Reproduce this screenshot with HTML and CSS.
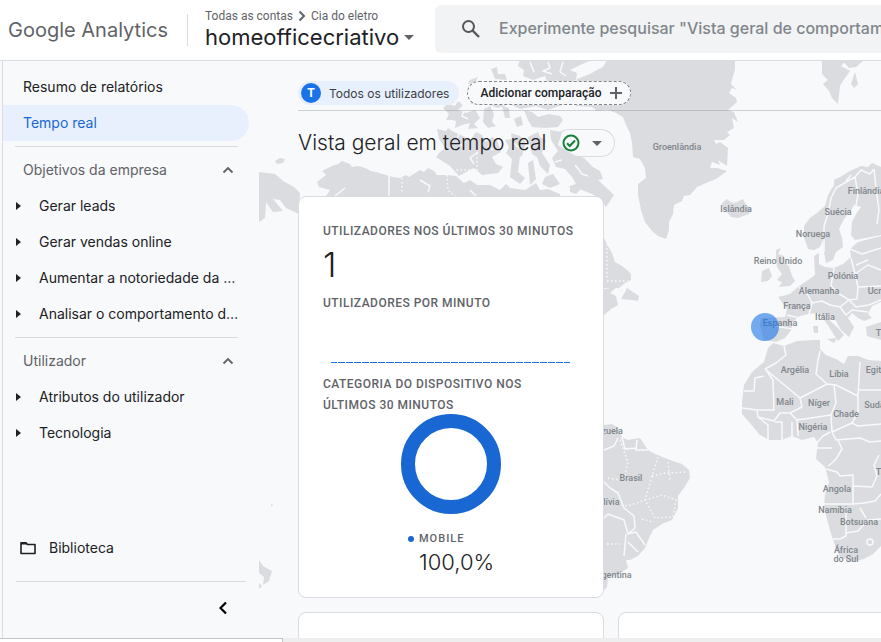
FILE: index.html
```html
<!DOCTYPE html>
<html lang="pt">
<head>
<meta charset="utf-8">
<title>Google Analytics</title>
<meta name="viewport" content="width=device-width, initial-scale=1">
<link rel="stylesheet" href="styles.css">
</head>
<body>
<header class="topbar">
  <div class="brand">Google Analytics</div>
  <div class="account">
    <nav class="crumbs" aria-label="Contas">
      <a href="#">Todas as contas</a>
      <svg width="8" height="12" viewBox="0 0 8 12"><path d="M1.5 1.5 6 6l-4.500 4.500" fill="none" stroke="#5f6368" stroke-width="2"/></svg>
      <a href="#">Cia do eletro</a>
    </nav>
    <button class="property" type="button">homeofficecriativo
      <svg width="10" height="5" viewBox="0 0 10 5"><path d="M0 0h10L5 5z" fill="#5f6368"/></svg>
    </button>
  </div>
  <label class="search">
    <svg width="20" height="20" viewBox="0 0 20 20" fill="none" stroke="#54585d"><circle cx="7.500" cy="7.500" r="5.500" stroke-width="2"/><path d="M11.500 11.500 18 18" stroke-width="2.400"/></svg>
    <input type="text" aria-label="Pesquisar" placeholder="Experimente pesquisar &quot;Vista geral de comportamento&quot;">
  </label>
</header>

<div class="body">
  <aside class="sidebar">
    <nav class="menu" aria-label="Relatórios">
      <a class="item" href="#">Resumo de relatórios</a>
      <a class="item active" href="#">Tempo real</a>
      <hr>
      <button class="item group" type="button">Objetivos da empresa
        <svg width="12" height="8" viewBox="0 0 12 8"><path d="M1.500 6.500 6 2l4.500 4.500" fill="none" stroke="#5f6368" stroke-width="1.800"/></svg>
      </button>
      <a class="item sub" href="#"><span>Gerar leads</span></a>
      <a class="item sub" href="#"><span>Gerar vendas online</span></a>
      <a class="item sub" href="#"><span>Aumentar a notoriedade da marca</span></a>
      <a class="item sub" href="#"><span>Analisar o comportamento dos utilizadores</span></a>
      <hr>
      <button class="item group" type="button">Utilizador
        <svg width="12" height="8" viewBox="0 0 12 8"><path d="M1.500 6.500 6 2l4.500 4.500" fill="none" stroke="#5f6368" stroke-width="1.800"/></svg>
      </button>
      <a class="item sub" href="#"><span>Atributos do utilizador</span></a>
      <a class="item sub" href="#"><span>Tecnologia</span></a>
    </nav>
    <div class="library">
      <a class="item lib" href="#">
        <svg width="16" height="14" viewBox="0 0 16 14"><path d="M1 12.500V1.800h5l1.500 1.700H15v9z" fill="none" stroke="#202124" stroke-width="1.600" stroke-linejoin="round"/><path d="M1 1.500h5l1.500 2H1z" fill="#202124"/></svg>
        Biblioteca
      </a>
      <button class="collapse" type="button" aria-label="Fechar menu">
        <svg width="10" height="14" viewBox="0 0 10 14"><path d="M8 1.500 2.500 7 8 12.500" fill="none" stroke="#000" stroke-width="2.200"/></svg>
      </button>
    </div>
  </aside>

  <main class="content">
    <svg class="map" width="640" height="600" viewBox="259 61 640 600" aria-label="Mapa">
      <g class="land">
        <!-- Greenland and Ellesmere -->
        <path d="M607 60 603 67 597 70 590 74 577 79 574 90 576 106 592 107 597 111 608 110 616 113 623 117 626 125 630 133 632 143 633 157 640 159 645 168 646 178 638 184 638 195 641 210 645 222 652 231 658 236 666 239 669 230 669 222 673 214 674 205 682 201 684 196 690 195 697 187 706 183 716 179 727 171 717 168 710 168 712 162 720 165 718 160 710 155 727 166 728 148 720 142 716 144 714 140 724 140 730 135 727 132 734 128 732 118 738 122 734 112 728 110 737 102 736 98 729 93 732 88 737 90 731 84 733 76 735 70 735 60Z"/>
        <path d="M520 60 518 66 524 70 523 76 533 80 545 76 548 84 556 80 564 84 576 80 577 73 570 70 580 65 592 60Z"/>
        <path d="M491 69 497 67 498 74 505 74 507 80 495 79Z M470 80 478 77 475 83 468 84Z M468 86 478 84 490 88 500 83 510 91 524 90 540 98 556 96 566 104 556 107 548 110 536 106 520 109 510 104 497 108 484 102 471 104Z"/>
        <!-- Arctic archipelago -->
        <path d="M443 108 448 104 455 106 458 101 463 105 458 110 466 113 475 110 480 118 474 124 478 128 468 129 470 123 462 125 455 128 456 121 452 120 446 120 449 114Z M484 109 490 106 494 114 492 122 496 126 488 128 483 122Z M502 106 509 108 510 118 505 118Z M514 119 521 116 523 125 517 127Z M524 110 532 112 538 117 549 114 560 116 563 120 558 127 545 128 532 127 528 120Z M437 129 446 131 448 128 452 131 463 136 470 140 476 132 482 135 486 142 492 137 497 140 501 152 492 157 496 164 503 167 498 173 482 175 474 168 468 171 459 176 450 166 436 157 440 152 445 148 439 139Z M505 140 512 139 511 133 520 136 526 143 522 156 513 160 506 153 509 147Z M528 137 538 132 540 137 546 140 542 153 550 165 548 174 540 166 537 157 532 154Z M550 130 562 132 558 145 574 155 584 158 593 167 600 171 603 179 598 180 614 195 606 207 599 198 592 194 582 190 568 187 576 184 572 177 565 169 556 167 552 158 558 151 551 140Z"/>
        <path d="M512 158 520 156 518 172 525 178 520 184 510 177Z M528 163 533 160 536 179 530 185Z M545 177 553 174 560 184 550 188 542 184Z M570 186 577 184 580 190 576 194 570 192Z"/>
        <!-- Alaska and northern mainland -->
        <path d="M275 161 280 158 285 159 283 163 277 164Z M259 172 275 174 283 181 294 187 300 193 299 214 286 208 280 200 273 199 283 211 273 212 266 202 265 218 259 222Z"/>
        <path d="M317 182 326 175 322 171 332 166 338 164 342 161 350 164 352 167 358 166 365 168 371 171 376 172 389 176 393 177 400 178 406 175 409 177 420 170 424 172 428 168 434 171 437 175 447 175 456 176 464 183 470 180 477 185 490 185 500 190 506 184 510 188 525 190 536 183 540 190 548 189 560 194 560 200 300 200 326 196 330 190 319 187Z"/>
        <!-- Quebec, Labrador, Newfoundland -->
        <path d="M604 238 608 246 612 253 615 262 622 266 627 270 631 274 631 280 625 283 619 288 604 288Z M630 281 627 288 633 292 639 296 638 301 632 300 621 299 625 292Z M604 289 617 287 610 293 616 296 618 305 611 309 604 315Z"/>
        <!-- South America -->
        <path d="M604 425 612 424 618 428 622 437 628 440 640 438 648 450 655 454 670 460 682 464 689 470 690 478 684 488 678 496 678 508 672 520 662 524 653 530 649 538 645 548 638 556 630 560 626 560 628 568 619 574 608 578 607 587 604 590Z"/>
        <!-- Svalbard, Iceland -->
        <path d="M822 61 846 61 841 66 850 71 843 81 840 86 838 104 832 98 829 91 823 84 828 80 822 74Z M855 72 858 84 854 88 851 84Z M843 61 863 61 856 67 849 68Z M723 207 722 203 727 199 732 203 737 202 743 199 746 205 751 209 749 214 738 218 731 217 726 211Z"/>
        <!-- Scandinavia and continental Europe -->
        <path d="M881 167 872 163 868 167 861 166 850 171 842 176 834 180 834 185 828 195 825 206 817 213 810 218 804 226 804 237 808 249 814 250 820 247 823 240 824 252 826 263 833 260 836 252 843 247 842 238 839 229 844 219 850 212 854 205 861 207 856 214 852 222 851 235 855 240 866 238 881 235Z"/>
        <path d="M776 250 781 248 778 254 784 256 783 262 789 266 792 276 795 281 790 286 779 287 782 282 777 280 782 274 777 267 776 260Z M762 271 769 268 772 276 768 281 761 282Z M814 256 819 253 819 264 825 267 834 268 843 264 851 257 850 249 858 242 881 236 881 302 872 306 868 314 872 318 864 321 858 318 852 313 848 318 854 327 849 337 841 330 836 321 830 315 826 317 838 328 844 335 838 341 829 327 822 317 818 313 808 314 800 316 791 323 792 329 785 338 776 342 764 340 760 326 761 318 785 317 787 309 778 297 790 294 799 286 808 280 815 275Z M813 326 818 326 818 333 814 333Z M827 339 837 338 834 343Z M866 327 881 322 881 340 867 336Z"/>
        <!-- Africa -->
        <path d="M773 343 784 346 797 341 814 340 820 340 820 349 826 355 836 359 844 364 848 356 858 356 868 360 881 361V546L873 554 864 559 852 562 840 557 834 543 829 527 824 507 825 494 829 482 825 467 816 459 817 450 818 443 814 437 802 440 792 436 782 440 769 440 760 435 750 423 742 414 742 402 744 385 752 372 764 362 768 348Z"/>
        <path d="M259 560 263 566 272 571 269 581 263 585 264 577 259 573Z M259 583 262 586 259 589Z M271 504 273 505 273 506 271 506Z"/>
      </g>
      <g class="borders">
        <!-- Fjords and straits -->
        <path d="M548 62 550 68 543 71 552 74 M530 62 534 72 M563 62 560 72 566 76 M460 131 457 139 462 146 M478 152 470 158 474 164 M488 146 493 150 M466 104 462 116 468 119 M514 143 519 148 M555 162 562 160 M575 165 582 174 588 176 M335 196 345 188 M420 180 430 186 428 192 M470 190 476 196"/>
        <path d="M389 173v24 M784 346 786 355 776 363 765 369 M765 369 800 398 827 384 816 374 818 360 820 351 M827 384 836 385 858 396 860 362 M744 391 754 391 755 378 764 376 M766 370 773 380 774 410 757 410 742 408 M800 398 802 407 790 413 780 413 774 421 758 417 757 410 M790 413 797 420 831 415 836 403 834 385 M858 390 881 390 M858 396 858 413 852 423 832 432 831 415 M797 420 798 436 M782 440 782 422 775 422 M768 440 768 425 758 417 M792 436 792 422 M830 432 823 436 816 444 M832 432 836 440 860 438 870 442 881 441 M852 423 858 426 881 424 M826 469 837 472 840 476 853 475 853 486 872 487 877 476 874 465 879 455 M823 504 853 504 853 486 M853 504 864 503 875 501 881 494 M846 507 846 536 840 539 833 539 M846 533 858 531 868 520 881 519 M866 518 860 508 M838 440 842 449 836 459 832 463 828 466 M816 448 832 448"/>
        <path d="M824 252 824 226 828 214 831 198 836 188 846 182 855 177 861 170 870 174 874 169 M855 177 858 194 856 206 M874 169 876 188 879 210 877 224 M846 181 851 175 M792 329 775 326 770 320 M787 315 800 318 M799 287 808 295 812 303 809 315 M812 303 822 301 830 305 840 307 849 300 838 293 831 286 834 268 M849 300 857 299 858 287 855 274 851 258 M858 287 881 286 M855 274 868 265 881 270 M840 307 846 315 852 310 868 312 M849 300 856 307 869 305 881 300 M850 249 862 254 881 248 M856 265 868 260"/>
        <path d="M604 450 614 446 618 438 M622 437 625 449 636 448 M637 440 636 450 648 450 M604 482 610 488 618 493 624 508 634 516 635 528 628 534 624 520 608 514 604 518 M628 534 636 532 645 545 M628 542 638 552 M626 534 624 556"/>
        <circle cx="870" cy="542" r="3"/>
        <path class="dotted" d="M477 145V170H454 M447 175 448 190 456 197 M402 178V194 M607 240 607 280 M607 281H628 M658 457 652 476 645 500 628 506 617 504 M652 476 665 473 687 472 M668 462 670 480 M645 500 662 495 676 500 673 517 655 518 645 500 M642 519 652 522 M607 544H620 M620 440 628 462 624 480 M608 478 620 480"/>
      </g>
      <g class="labels">
        <text x="677" y="150">Groenlândia</text><text x="736" y="212">Islândia</text><text x="866" y="194">Finlândia</text><text x="838" y="215">Suécia</text><text x="813" y="237">Noruega</text><text x="778" y="264">Reino Unido</text><text x="843" y="279">Polónia</text><text x="819" y="294">Alemanha</text><text x="883" y="294">Ucrânia</text><text x="797" y="309">França</text><text x="825" y="320">Itália</text><text x="780" y="326">Espanha</text><text x="891" y="336">Turquia</text><text x="795" y="373">Argélia</text><text x="839" y="377">Líbia</text><text x="876" y="373">Egito</text><text x="785" y="405">Mali</text><text x="819" y="406">Níger</text><text x="877" y="408">Sudão</text><text x="846" y="417">Chade</text><text x="813" y="430">Nigéria</text><text x="894" y="475">Tanzânia</text><text x="837" y="492">Angola</text><text x="835" y="513">Namíbia</text><text x="859" y="525">Botsuana</text><text x="846" y="553">África</text><text x="846" y="562">do Sul</text><text x="602" y="434">Venezuela</text><text x="631" y="481">Brasil</text><text x="606" y="505">Bolívia</text><text x="612" y="578">Argentina</text>
      </g>
      <circle class="pin" cx="765" cy="327" r="14"/>
    </svg>

    <div class="comparisons">
      <button class="chip" type="button"><span class="avatar">T</span>Todos os utilizadores</button>
      <button class="chip add" type="button">Adicionar comparação
        <svg width="12" height="12" viewBox="0 0 12 12"><path d="M6 0v12M0 6h12" stroke="#5f6368" stroke-width="2"/></svg>
      </button>
    </div>

    <div class="heading">
      <h1>Vista geral em tempo real</h1>
      <button class="status" type="button" aria-label="Qualidade dos dados">
        <svg width="18" height="18" viewBox="0 0 18 18" fill="none" stroke="#188038"><circle cx="9" cy="9" r="7.500" stroke-width="2"/><path d="M5 9.200 7.800 12 13 6.500" stroke-width="2"/></svg>
        <svg width="10" height="5" viewBox="0 0 10 5"><path d="M0 0h10L5 5z" fill="#5f6368"/></svg>
      </button>
    </div>

    <div class="cards">
      <section class="card">
        <h2>Utilizadores nos últimos 30 minutos</h2>
        <p class="total">1</p>
        <h2>Utilizadores por minuto</h2>
        <div class="bars"></div>
        <h2 class="wrap">Categoria do dispositivo nos últimos 30 minutos</h2>
        <svg class="donut" width="100" height="100" viewBox="0 0 100 100"><circle cx="50" cy="50" r="43" fill="none" stroke="#1967d2" stroke-width="14"/></svg>
        <dl class="legend">
          <dt>Mobile</dt>
          <dd>100,0%</dd>
        </dl>
      </section>
      <section class="card"></section>
      <section class="card"></section>
    </div>
  </main>
</div>
<footer class="statusbar"><div class="link-status"></div></footer>
</body>
</html>
```
FILE: styles.css
```css
* { box-sizing: border-box; }

body {
  margin: 0;
  height: 100vh;
  display: flex;
  flex-direction: column;
  overflow: hidden;
  background: #f8f9fb;
  color: #202124;
  font-family: "Inter", "Open Sans", sans-serif;
  font-size: 14px;
}

button {
  border: 0;
  padding: 0;
  background: none;
  color: inherit;
  font: inherit;
  cursor: pointer;
}

a { color: inherit; text-decoration: none; }
svg { display: block; flex: none; }
h1, h2, p, dl, dd { margin: 0; font-weight: 400; }

/* Top bar */
.topbar {
  flex: none;
  display: flex;
  align-items: center;
  height: 61px;
  padding-left: 8px;
  background: #fff;
  border-bottom: 1px solid #dadce0;
}

.brand {
  width: 180px;
  height: 32px;
  line-height: 32px;
  color: #5f6368;
  font-size: 20px;
  white-space: nowrap;
  border-right: 1px solid #dadce0;
}

.account {
  width: 230px;
  margin-left: 17px;
}

.crumbs {
  display: flex;
  align-items: center;
  gap: 5px;
  color: #5f6368;
  font-family: Roboto, sans-serif;
  font-size: 12px;
  line-height: 14px;
}

.property {
  display: flex;
  align-items: center;
  gap: 5px;
  font-size: 22px;
  line-height: 28px;
}

.search {
  flex: 1;
  min-width: 0;
  display: flex;
  align-items: center;
  gap: 18px;
  height: 48px;
  margin-bottom: 2px;
  padding-left: 26px;
  background: #f1f3f4;
  border-radius: 6px 0 0 6px;
}

.search input {
  flex: 1;
  min-width: 0;
  border: 0;
  padding: 0 0 2px;
  background: none;
  font: 500 16px "Inter", sans-serif;
  outline: 0;
}

.search input::placeholder { color: #80868b; opacity: 1; }

.body {
  flex: 1;
  min-height: 0;
  display: flex;
}

/* Sidebar */
.sidebar {
  flex: none;
  width: 257px;
  margin-left: 2px;
  padding: 8px 10px 5px 0;
  display: flex;
  flex-direction: column;
  justify-content: space-between;
  border-left: 1px solid #dadce0;
}

.item {
  display: flex;
  align-items: center;
  width: 100%;
  height: 36px;
  padding: 0 10px 1px 20px;
  text-align: left;
  white-space: nowrap;
}

.item.active {
  background: #e8f0fe;
  color: #1967d2;
  border-radius: 0 18px 18px 0;
}

.item.group {
  justify-content: space-between;
  padding-right: 15px;
  color: #5f6368;
}

.item.sub { gap: 18px; padding-left: 13px; }

.item.sub::before {
  content: "";
  flex: none;
  border: solid transparent;
  border-width: 4px 0 4px 5px;
  border-left-color: #202124;
}

.item.sub span { overflow: hidden; text-overflow: ellipsis; }

.item.lib { gap: 13px; padding-left: 17px; }

.menu hr {
  margin: 5px 11px 5px 12px;
  border: 0;
  border-top: 1px solid #dadce0;
}

.library { display: flex; flex-direction: column; }

.collapse {
  display: flex;
  justify-content: flex-end;
  align-items: center;
  height: 52px;
  margin: 15px 3px 0 13px;
  padding-right: 18px;
  border-top: 1px solid #dadce0;
}

/* Content and its map backdrop */
.content {
  flex: 1;
  min-width: 0;
  position: relative;
  overflow: hidden;
  padding: 20px 0 0 39px;
}

.map { position: absolute; top: 0; left: 0; }
.land path { fill: #dadce0; }
.borders path, .borders circle { fill: none; stroke: #f8f9fb; stroke-width: 1.5; stroke-linejoin: round; }
.borders .dotted { stroke-dasharray: 1.5 2.5; }
.labels text {
  fill: #80868b;
  font-family: Roboto, sans-serif;
  font-size: 9px;
  font-weight: 500;
  text-anchor: middle;
}
.pin { fill: #1a73e8; fill-opacity: .6; }

.comparisons, .heading, .cards { position: relative; }

.comparisons {
  display: flex;
  gap: 8px;
  padding-bottom: 5px;
  border-bottom: 1px solid rgba(128, 134, 139, .35);
}

.chip {
  display: flex;
  align-items: center;
  gap: 8px;
  height: 24px;
  padding: 0 10px 0 3px;
  background: #e8f0fe;
  border-radius: 12px;
  color: #3c4043;
  font-size: 12px;
}

.avatar {
  width: 20px;
  height: 20px;
  border-radius: 50%;
  background: #1a73e8;
  color: #fff;
  font-weight: 700;
  line-height: 20px;
}

.chip.add {
  padding: 0 8px 0 12px;
  background: #f8f9fb;
  border: 1px dashed #80868b;
  color: #202124;
  font-family: Roboto, sans-serif;
  font-weight: 500;
}

.heading {
  display: flex;
  align-items: center;
  height: 28px;
  margin: 18px 0 39px;
}

h1 { font-size: 21px; font-weight: 300; line-height: 28px; }

.status {
  display: flex;
  align-items: center;
  gap: 12px;
  height: 28px;
  margin-left: 9px;
  padding: 0 12px 0 6px;
  border: 1px solid #dadce0;
  border-left-color: transparent;
  border-radius: 14px;
}

.cards {
  display: grid;
  grid-template-columns: 306px 306px;
  gap: 14px;
}

.card {
  min-height: 60px;
  padding: 24px 24px 21px;
  background: #fff;
  border: 1px solid #dadce0;
  border-radius: 8px;
}

.card:first-child { grid-column: 1 / -1; width: 306px; }

.card h2 {
  color: #5f6368;
  font-family: Roboto, sans-serif;
  font-size: 12px;
  font-weight: 500;
  letter-spacing: .04em;
  line-height: 20px;
  text-transform: uppercase;
}

.card h2.wrap { margin-bottom: -2px; padding-right: 24px; line-height: 21px; }

.total { padding-bottom: 4px; font-size: 34px; font-weight: 300; line-height: 48px; }

.bars {
  height: 50px;
  margin: 0 9px 11px 8px;
  border-bottom: 1px solid;
  border-image: repeating-linear-gradient(90deg, #1a73e8 0 7px, #fff 7px 8px) 1;
}

.donut { margin: 0 auto; }

.legend { width: 86px; margin: 16px auto 0; }

.legend dt {
  display: flex;
  align-items: center;
  gap: 5px;
  color: #5f6368;
  font-family: Roboto, sans-serif;
  font-size: 11px;
  font-weight: 500;
  letter-spacing: 1px;
  line-height: 18px;
  text-transform: uppercase;
}

.legend dt::before {
  content: "";
  width: 6px;
  height: 6px;
  border-radius: 50%;
  background: #1967d2;
}

.legend dd { padding-left: 11px; font-size: 22px; font-weight: 300; line-height: 28px; }

/* Browser status strip */
.statusbar {
  flex: none;
  height: 4px;
  background: #eee;
}

.link-status {
  width: 283px;
  height: 4px;
  background: #fff;
  border: solid #c4c7c9;
  border-width: 1px 1px 0 0;
}
```
